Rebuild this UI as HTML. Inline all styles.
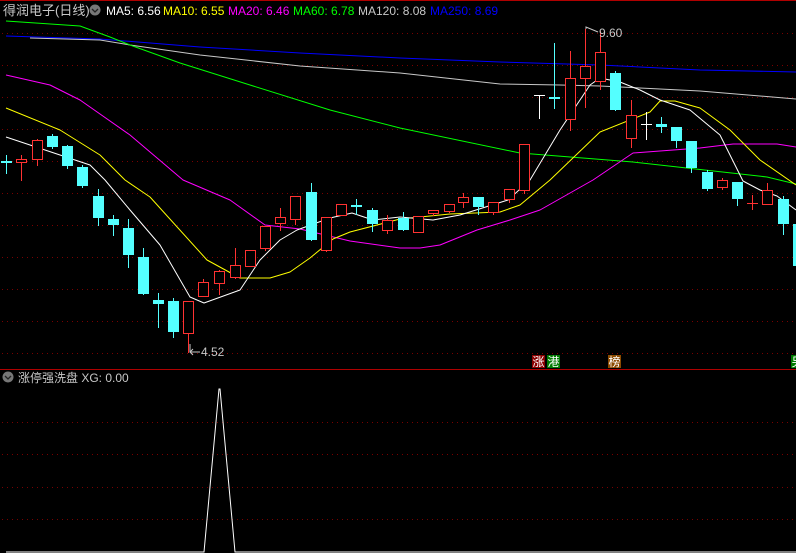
<!DOCTYPE html>
<html><head><meta charset="utf-8">
<style>
html,body{margin:0;padding:0;background:#000;width:796px;height:553px;overflow:hidden}
svg{display:block}
text{font-family:"Liberation Sans","Noto Sans CJK SC",sans-serif}
</style></head>
<body>
<svg id="s" width="796" height="553" xmlns="http://www.w3.org/2000/svg">
<rect width="796" height="553" fill="#000"/>
<line x1="0" y1="0.5" x2="796" y2="0.5" stroke="#b00000"/>
<g id="grid" stroke="#7a0000" stroke-dasharray="1 4"></g>
<line x1="0" y1="369.5" x2="796" y2="369.5" stroke="#b00000"/>
<g id="ma" fill="none" stroke-width="1" stroke-linejoin="round"></g>
<g id="cd"></g>
<text x="3" y="15" font-size="13" fill="#c8c8c8">得润电子(日线)</text>
<circle cx="95" cy="10" r="5.5" fill="#777"/>
<path d="M92 9 L95 12 L98 9" stroke="#222" stroke-width="1.3" fill="none"/>
<text x="106" y="15" font-size="12" fill="#fff">MA5: 6.56</text>
<text x="163" y="15" font-size="12" fill="#ffff00">MA10: 6.55</text>
<text x="228" y="15" font-size="12" fill="#ff00ff">MA20: 6.46</text>
<text x="293" y="15" font-size="12" fill="#00ff00">MA60: 6.78</text>
<text x="358" y="15" font-size="12" fill="#c8c8c8">MA120: 8.08</text>
<text x="430" y="15" font-size="12" fill="#0000ff">MA250: 8.69</text>
<path d="M190 344 L190 352 L200 352 M190 352 L193 349 M190 352 L193 355" stroke="#c8c8c8" fill="none"/>
<text x="201" y="356" font-size="12" fill="#c8c8c8">4.52</text>
<path d="M586 29 L586 27 L598 32" stroke="#c8c8c8" fill="none"/>
<text x="599" y="37" font-size="12" fill="#c8c8c8">9.60</text>
<rect x="532" y="355" width="13" height="13" fill="#8b0000"/>
<text x="532.5" y="366" font-size="12" fill="#fff">涨</text>
<rect x="547" y="355" width="13" height="13" fill="#007a00"/>
<text x="547.5" y="366" font-size="12" fill="#fff">港</text>
<rect x="608" y="355" width="13" height="13" fill="#8b4a00"/>
<text x="608.5" y="366" font-size="12" fill="#fff">榜</text>
<rect x="791" y="355" width="13" height="13" fill="#007a00"/>
<text x="791.5" y="366" font-size="12" fill="#fff">另</text>
<circle cx="8" cy="377" r="5.5" fill="#777"/>
<path d="M5 376 L8 379 L11 376" stroke="#222" stroke-width="1.3" fill="none"/>
<text x="18" y="382" font-size="12" fill="#c8c8c8">涨停强洗盘 XG: 0.00</text>
<polyline points="6,552 204,552 219,389 220,389 235,552 796,552" fill="none" stroke="#fff" stroke-width="1"/>
</svg>
<script>
var NS="http://www.w3.org/2000/svg";
function el(p,t,a){var e=document.createElementNS(NS,t);for(var k in a)e.setAttribute(k,a[k]);p.appendChild(e);return e;}
var g=document.getElementById('grid');
[33,65,97,129,161,193,225,257,289,321,353,422,454,487,519].forEach(function(y){el(g,'line',{x1:2,x2:796,y1:y+.5,y2:y+.5});});
var ma=document.getElementById('ma');
var L=[
["#0000ff","6,36 100,39 200,47 300,53 400,58 500,62 600,65 700,70 796,72"],
["#c8c8c8","30,38 100,40 130,45 200,55 300,66 400,73 500,84 560,85 600,86 700,91 796,99"],
["#00ff00","6,21 80,26 110,37 130,45 180,63 250,85 330,110 400,128 520,153 633,162 767,177 796,184"],
["#ff00ff","6,75 50,85 80,100 130,135 183,180 230,200 265,225 300,229 350,241 400,248 420,248 440,245 477,230 510,220 540,210 593,180 633,153 700,148 733,144 777,144 796,147"],
["#ffff00","6,108 60,130 100,155 125,180 150,197 207,260 240,278 270,278 290,272 310,258 333,239 350,232 400,219 450,214 500,212 520,205 550,180 600,132 650,112 660,101 675,101 700,108 730,130 760,160 796,185"],
["#ffffff","6,137 30,145 60,155 90,165 105,180 130,210 160,245 190,297 204,303 240,290 260,260 280,240 297,230 330,218 352,213 373,220 400,217 433,220 460,215 508,200 530,180 560,130 590,85 600,78 620,82 640,90 660,100 690,110 720,135 743,181 760,190 777,196 796,210"]];
L.forEach(function(l){el(ma,'polyline',{points:l[1],stroke:l[0]});});
var C=[
[6,'c',161,163,155,173],[21,'r',159,162,155,180],[37,'r',140,159,139,165],[52,'c',136,147,134,148],
[67,'c',146,166,145,168],[82,'c',167,186,165,187],[98,'c',196,218,189,225],[113,'c',219,225,215,235],
[128,'c',228,255,219,267],[143,'c',257,294,248,294],[158,'c',300,304,293,327],[173,'c',301,332,298,337],
[188,'r',301,333,301,352],[203,'r',282,296,279,296],[219,'r',271,283,270,294],[235,'r',265,277,248,278],
[250,'r',250,266,250,266],[265,'r',226,248,226,250],[280,'r',217,223,208,230],[295,'r',196,219,196,224],
[311,'c',192,240,183,240],[326,'r',217,250,217,251],[341,'r',204,215,204,215],[356,'c',205,207,199,214],
[372,'c',210,224,208,231],[387,'r',220,230,215,233],[403,'c',218,230,212,230],[418,'r',216,232,216,232],
[433,'r',210,213,210,215],[449,'r',204,211,204,212],[463,'r',197,202,193,207],[478,'c',197,207,197,214],
[493,'r',202,212,202,214],[509,'r',189,199,189,202],[524,'r',144,190,144,193],[539,'w',95,95,95,118],
[554,'c',97,99,43,108],[570,'r',78,119,51,130],[585,'r',66,78,29,107],[600,'r',52,81,31,89],
[615,'c',73,110,71,110],[631,'r',115,138,100,147],[646,'w',124,124,112,139],[661,'c',124,127,117,132],
[676,'c',127,141,127,147],[691,'c',141,168,141,172],[707,'c',172,189,170,190],[722,'r',180,187,178,189],
[737,'c',182,199,182,205],[752,'r',203,203,195,209],[767,'r',190,204,183,204],[783,'c',199,224,196,234],
[798,'c',224,266,224,266]];
var cd=document.getElementById('cd');
C.forEach(function(c){
 var x=c[0],col=c[1]=='r'?'#ff3232':c[1]=='c'?'#54ffff':'#ffffff';
 el(cd,'line',{x1:x+.5,x2:x+.5,y1:c[4],y2:c[5]+1,stroke:col});
 var h=c[3]-c[2];
 if(c[1]=='r'){
  if(h<1){el(cd,'line',{x1:x-5,x2:x+6,y1:c[2]+.5,y2:c[2]+.5,stroke:col});}
  else{el(cd,'rect',{x:x-4.5,y:c[2]+.5,width:10,height:h,fill:'#000',stroke:col});}
 } else if(c[1]=='w'){
  el(cd,'line',{x1:x-5,x2:x+6,y1:c[2]+.5,y2:c[2]+.5,stroke:col});
 } else {
  el(cd,'rect',{x:x-5,y:c[2],width:11,height:Math.max(h,2),fill:col});
 }
});
</script>
</body></html>
